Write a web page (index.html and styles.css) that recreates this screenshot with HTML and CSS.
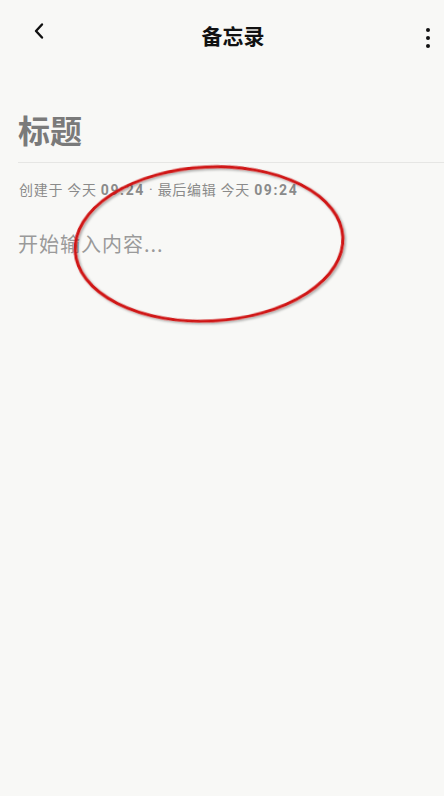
FILE: index.html
```html
<!DOCTYPE html>
<html lang="zh-CN">
<head>
<meta charset="utf-8">
<title>备忘录</title>
<link rel="stylesheet" href="styles.css">
</head>
<body>
<div class="screen">
  <header class="topbar">
    <button class="icon-btn back" aria-label="返回">
      <svg width="14" height="18" viewBox="0 0 14 18"><path d="M10 2.5 L4 9 L10 15.5" fill="none" stroke="#111" stroke-width="2.4" stroke-linecap="round" stroke-linejoin="round"/></svg>
    </button>
    <h1 class="page-title">备忘录</h1>
    <button class="icon-btn more" aria-label="更多">
      <span class="dot"></span><span class="dot"></span><span class="dot"></span>
    </button>
  </header>

  <main class="editor">
    <div class="note-title">标题</div>
    <div class="meta">创建于 今天 <b>09:24</b> · 最后编辑 今天 <b>09:24</b></div>
    <div class="placeholder">开始输入内容...</div>
  </main>

  <svg class="annotation" width="444" height="796" viewBox="0 0 444 796" aria-hidden="true">
    <defs>
      <filter id="sh" x="-10%" y="-10%" width="120%" height="120%">
        <feDropShadow dx="1.5" dy="1.5" stdDeviation="1.2" flood-color="#000" flood-opacity="0.35"/>
      </filter>
    </defs>
    <ellipse cx="209" cy="244" rx="134" ry="77" transform="rotate(-3 209 244)" fill="none" stroke="#d01212" stroke-width="3" filter="url(#sh)"/>
  </svg>
</div>
</body>
</html>
```
FILE: styles.css
```css
* { box-sizing: border-box; }
html, body {
  margin: 0;
  padding: 0;
  background: #f8f8f6;
}
body {
  font-family: "Noto Sans CJK SC", "Noto Sans", Roboto, sans-serif;
  color: #111;
}
.screen {
  position: relative;
  width: 444px;
  height: 796px;
  overflow: hidden;
}
.topbar {
  height: 70px;
  display: grid;
  grid-template-columns: 60px 1fr 60px;
  align-items: center;
}
.icon-btn {
  background: none;
  border: 0;
  padding: 0;
  display: flex;
  cursor: pointer;
}
.back {
  justify-self: start;
  margin-left: 32px;
  margin-top: -8px;
}
.page-title {
  margin: 0 0 0 22px;
  text-align: center;
  font-size: 21px;
  font-weight: 700;
  line-height: 30px;
  color: #111;
}
.more {
  justify-self: end;
  margin-right: 14px;
  margin-top: 6px;
  flex-direction: column;
  gap: 3.5px;
  align-items: center;
}
.dot {
  width: 4.5px;
  height: 4.5px;
  border-radius: 50%;
  background: #111;
}
.editor {
  display: flex;
  flex-direction: column;
}
.note-title {
  margin: 37px 0 0 18px;
  padding-bottom: 11px;
  border-bottom: 1px solid #e6e6e4;
  font-size: 32px;
  line-height: 44px;
  font-weight: 700;
  color: #7a7a7a;
}
.meta {
  margin: 17px 0 0 19px;
  font-family: Roboto, "Noto Sans CJK SC", sans-serif;
  font-size: 14px;
  line-height: 20px;
  letter-spacing: 0.7px;
  color: #8a8a8a;
}
.meta b {
  font-weight: 700;
  letter-spacing: 1.6px;
  color: #8a8a8a;
}
.placeholder {
  margin: 30px 0 0 18px;
  font-size: 20px;
  line-height: 28px;
  letter-spacing: 1px;
  color: #9a9a9a;
}
.annotation {
  position: absolute;
  left: 0;
  top: 0;
  pointer-events: none;
}
```
